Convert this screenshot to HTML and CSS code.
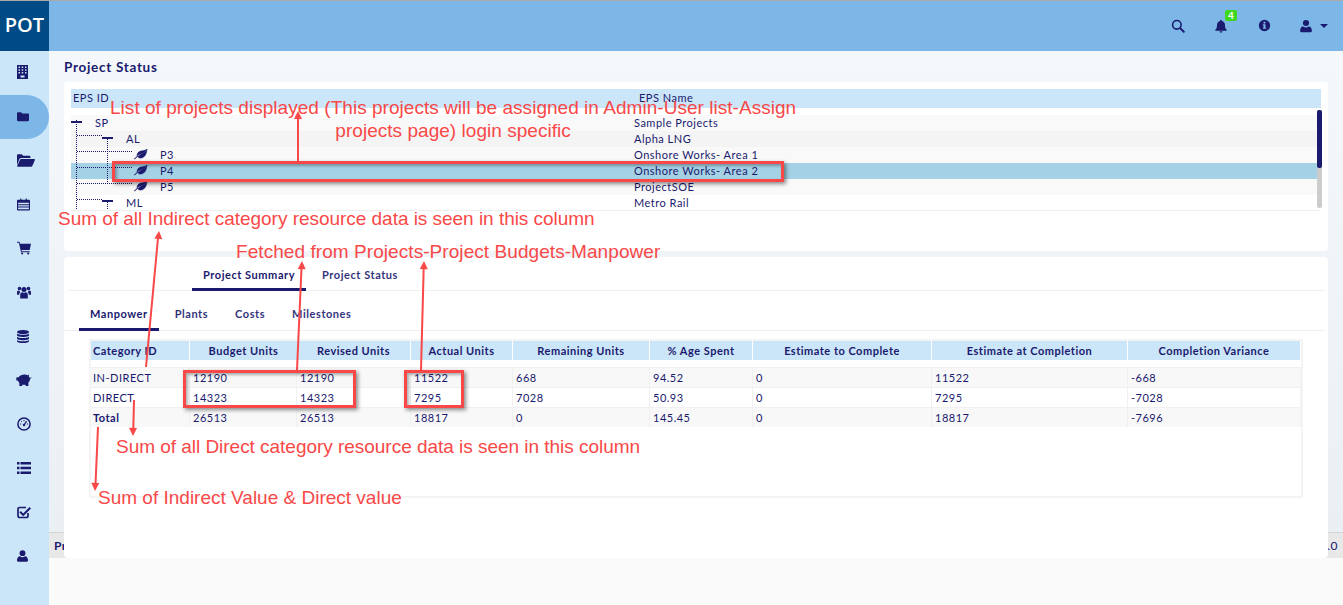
FILE: index.html
```html
<!DOCTYPE html>
<html lang="en">
<head>
  <meta charset="UTF-8">
  <title>Project Status</title>
  <link rel="stylesheet" href="styles.css">
</head>
<body>

<header class="topbar">
  <div class="logo">POT</div>
  <div class="top-icons">
    <svg class="top-icon search" viewBox="0 0 16 16"><circle cx="6.7" cy="6.7" r="4.9" fill="none" stroke="#1a1a6e" stroke-width="1.8"/><path d="M10.4 10.4l4.2 4.2" stroke="#1a1a6e" stroke-width="2.2" stroke-linecap="round"/></svg>
    <div class="bell-wrap">
      <svg class="top-icon" viewBox="0 0 16 16"><path d="M8 0.8c.6 0 1 .4 1 1v.5c2.3.5 3.600 2.300 3.600 4.700 0 2.600.5 3.900 2 5.500v.8H1.400v-.8c1.500-1.600 2-2.900 2-5.500 0-2.400 1.300-4.200 3.600-4.700v-.5c0-.6.4-1 1-1zM6.400 14.100h3.200c0 .9-.7 1.500-1.600 1.500s-1.600-.6-1.600-1.500z" fill="#1a1a6e"/></svg>
      <span class="badge">4</span>
    </div>
    <svg class="top-icon info" viewBox="0 0 16 16"><path fill-rule="evenodd" d="M8 1a7 7 0 1 1 0 14A7 7 0 0 1 8 1zM6.800 3.400v2.100h2.400V3.400zM6 6.600v1.300h.8v2.900H6v1.300h4v-1.300h-.8V6.600z" fill="#1a1a6e"/></svg>
    <div class="user-menu">
      <svg class="top-icon" viewBox="0 0 16 16"><circle cx="8" cy="4.600" r="3.500" fill="#1a1a6e"/><path d="M2.500 15c-.8 0-1.200-.5-1.200-1.200 0-3 1.200-5.300 3.500-5.300 1 .8 2.100 1.200 3.200 1.200s2.200-.4 3.200-1.200c2.300 0 3.500 2.300 3.500 5.300 0 .7-.4 1.200-1.200 1.200z" fill="#1a1a6e"/></svg>
      <span class="caret"></span>
    </div>
  </div>
</header>

<div class="layout">
  <nav class="sidebar">
    <a class="side-item"><svg viewBox="1.500 0 11 14" class="ico-s"><path fill-rule="evenodd" d="M1.500 0h11v14h-11zM3 1.500v1.500h1.500V1.500zM6.200 1.500v1.500h1.500V1.500zM9.500 1.500v1.500H11V1.500zM3 4.200v1.500h1.500V4.200zM6.200 4.200v1.500h1.500V4.200zM9.500 4.200v1.500H11V4.200zM3 7v1.500h1.500V7zM6.200 7v1.500h1.500V7zM9.500 7v1.500H11V7zM5 10.500V12.500h4V10.500z" fill="#1a1a6e"/></svg></a>
    <a class="side-item active"><svg viewBox="0 0 14 12" class="ico-f"><path d="M1.300 1h3.400l1.500 1.500h6.500c.7 0 1.300.6 1.300 1.300v6.400c0 .7-.6 1.300-1.300 1.300H1.300C.6 11.500 0 10.900 0 10.200V2.300C0 1.600.6 1 1.300 1z" fill="#1a1a6e"/></svg></a>
    <a class="side-item"><svg viewBox="0 0 18 13" class="ico-o"><path d="M0 11V1.500C0 .8.500.3 1.200.3h3.500l1.500 1.500h6c.7 0 1.200.5 1.200 1.200v1H4.200c-.8 0-1.400.4-1.800 1.100z" fill="#1a1a6e"/><path d="M4.300 5h13c.5 0 .8.500.6 1l-2.600 6c-.2.500-.7.800-1.200.8H.8c-.5 0-.8-.5-.6-1l2.800-6c.2-.500.700-.800 1.300-.800z" fill="#1a1a6e"/></svg></a>
    <a class="side-item"><svg viewBox="0 0 14 13" class="ico-c"><path fill-rule="evenodd" d="M1 1.500h2.500V0h1.200v1.500h4.600V0h1.200v1.500H13c.6 0 1 .4 1 1V12c0 .6-.4 1-1 1H1c-.6 0-1-.4-1-1V2.500c0-.6.400-1 1-1zM1.200 4.600v1.500h11.600V4.600zM1.200 7.200v1.500h11.600V7.200zM1.200 9.800v1.700h11.600V9.800z" fill="#1a1a6e"/></svg></a>
    <a class="side-item"><svg viewBox="0 0 15 14" class="ico-w"><path d="M0 .4h2.600l.7 2H15l-1.400 6.700H4.800l.4 1.500h8.500v1H4.300L2 1.500H0z" fill="#1a1a6e"/><circle cx="5.500" cy="12.900" r="1.100" fill="#1a1a6e"/><circle cx="12" cy="12.900" r="1.100" fill="#1a1a6e"/></svg></a>
    <a class="side-item"><svg viewBox="0 0 15 14" class="ico-w"><circle cx="7.500" cy="4.400" r="2.700" fill="#1a1a6e"/><circle cx="2.700" cy="3.300" r="1.900" fill="#1a1a6e"/><circle cx="12.300" cy="3.300" r="1.900" fill="#1a1a6e"/><path d="M3.400 14V10.400C3.400 8.300 4.500 7.300 5.700 7.300c.6.400 1.200.6 1.800.6s1.200-.2 1.800-.6c1.200 0 2.300 1 2.300 3.100V14z" fill="#1a1a6e"/><path d="M0 10V7.500C0 6 .8 5.500 1.600 5.500c.4.300.8.400 1.300.4 0 .700.200 1 .6 1.500C2.700 8 2.300 9 2.300 10zM15 10V7.500c0-1.500-.8-2-1.600-2-.4.300-.8.400-1.300.4 0 .700-.2 1-.6 1.500.8.600 1.200 1.600 1.200 2.600z" fill="#1a1a6e"/></svg></a>
    <a class="side-item"><svg viewBox="0 0 12 13" class="ico-d"><ellipse cx="6" cy="2" rx="6" ry="2" fill="#1a1a6e"/><path d="M0 3.400c1 1 3 1.400 6 1.400s5-.4 6-1.400v1.800c0 1-2.700 1.700-6 1.700S0 6.200 0 5.200zM0 6.700c1 1 3 1.400 6 1.400s5-.4 6-1.400v1.800c0 1-2.700 1.700-6 1.700S0 9.500 0 8.500zM0 9.900c1 1 3 1.400 6 1.400s5-.4 6-1.400v1.300c0 1-2.700 1.800-6 1.800S0 12.200 0 11.200z" fill="#1a1a6e"/></svg></a>
    <a class="side-item"><svg viewBox="0 0 16 12" class="ico-p"><path d="M2.500 3.200c1.500-1.700 3.500-2.700 6-2.700 1.300 0 2.400.3 3.200.8l1.200-.8v2.300c.4.400.6.800.8 1.200l1.300-.7c.2-.100.500 0 .4.300-.2.500-.9 1.200-1.400 1.500 0 1.500-.7 2.700-1.600 3.500V12h-2.600l-.4-1.300c-.8.200-2.300.2-3 0L6 12H3.400V9.100C2.600 8.400 2.100 7.600 1.900 6.600H.3V3.600z" fill="#1a1a6e"/></svg></a>
    <a class="side-item"><svg viewBox="0 0 14 14" class="ico-w"><circle cx="7" cy="7" r="6.100" fill="none" stroke="#1a1a6e" stroke-width="1.500"/><path d="M7 8l2.600-3.800" stroke="#1a1a6e" stroke-width="1.200"/><circle cx="7" cy="8" r="1.200" fill="#1a1a6e"/><path d="M3 7h1.200M9.800 7H11M7 3v1.200M4.200 4.200l.8.800" stroke="#1a1a6e"/></svg></a>
    <a class="side-item"><svg viewBox="0 0 14 13" class="ico-w"><path d="M0 .5h2.500v2.500H0zM3.500 .5H14v2.500H3.500zM0 5.200h2.500v2.500H0zM3.500 5.200H14v2.500H3.500zM0 10h2.500v2.500H0zM3.500 10H14v2.500H3.500z" fill="#1a1a6e"/></svg></a>
    <a class="side-item"><svg viewBox="0 0 14 13" class="ico-w"><path d="M11 7.500V10.300c0 1-.7 1.700-1.700 1.700H2.700C1.700 12 1 11.300 1 10.300V3.700C1 2.700 1.700 2 2.700 2H9" fill="none" stroke="#1a1a6e" stroke-width="1.700"/><path d="M3.800 5.600l2.400 2.400L12.500 1.500 14 3 6.200 10.800 2.400 7z" fill="#1a1a6e"/></svg></a>
    <a class="side-item"><svg viewBox="1 0.800 14 14.900" class="ico-u"><circle cx="8" cy="4.600" r="3.700" fill="#1a1a6e"/><path d="M2.500 15.500c-1 0-1.500-.5-1.500-1.400 0-3 1.400-5.400 3.800-5.400 1 .8 2.100 1.200 3.200 1.200s2.200-.4 3.200-1.200c2.400 0 3.800 2.400 3.800 5.400 0 .9-.5 1.400-1.500 1.400z" fill="#1a1a6e"/></svg></a>
  </nav>

  <main class="main">
    <div class="content">
      <h1 class="page-title">Project Status</h1>

      <section class="card card-tree">
        <div class="tree-head">
          <div class="tree-head-id">EPS ID</div>
          <div class="tree-head-name">EPS Name</div>
        </div>
        <div class="tree-body">
          <div class="tree-row odd"><span class="tree-id lvl0">SP</span><span class="tree-name">Sample Projects</span></div>
          <div class="tree-row alt"><span class="tree-id lvl1">AL</span><span class="tree-name">Alpha LNG</span></div>
          <div class="tree-row odd"><span class="tree-id lvl2">P3</span><span class="tree-name">Onshore Works- Area 1</span></div>
          <div class="tree-row selected"><span class="tree-id lvl2">P4</span><span class="tree-name">Onshore Works- Area 2</span></div>
          <div class="tree-row odd"><span class="tree-id lvl2">P5</span><span class="tree-name">ProjectSOE</span></div>
          <div class="tree-row"><span class="tree-id lvl1">ML</span><span class="tree-name">Metro Rail</span></div>

          <svg class="tree-lines" width="90" height="95">
            <defs>
              <g id="leaf" stroke="#1a1a6e" stroke-width="0.4">
                <path d="M13 0c-.6 1-2.500 1.300-5 1.700C4.800 2.200 3 3.900 3 6.200c0 .4 0 .7.1 1 1.200-1.300 3-2.400 5.400-3C10.500 3.500 12.300 1.800 13 0z"/>
                <path d="M3.700 8c1 1 2.400 1.400 3.900 1C11.300 8.200 12.900 4.200 13 0c-.3 1.500-2 3.400-5 4.600-1.800.8-3.200 2-4.300 3.400z"/>
                <path d="M0 10c1-.8 2-1.800 3.200-3l.5.4C2.500 8.600 1.300 9.600.5 10z"/>
              </g>
            </defs>
            <path class="dots" d="M5.500 5V95M5.500 20.500H32M36.500 22V68M36.500 87V95M5.500 36.500H62M5.500 52.500H62M5.500 68.500H62M5.500 84.500H32"/>
            <g fill="#1a1a6e">
              <rect x="0" y="6" width="11" height="2"/>
              <rect x="31" y="22" width="11" height="2"/>
              <rect x="31" y="85" width="11" height="2"/>
              <use href="#leaf" x="63" y="34"/>
              <use href="#leaf" x="63" y="50"/>
              <use href="#leaf" x="63" y="66"/>
            </g>
          </svg>
          <div class="tree-scroll"><div class="tree-thumb"></div></div>
        </div>
      </section>

      <section class="card card-summary">
        <div class="tabs tabs-main">
          <a class="tab on">Project Summary</a>
          <a class="tab">Project Status</a>
        </div>
        <div class="tabs tabs-sub">
          <a class="tab on">Manpower</a>
          <a class="tab">Plants</a>
          <a class="tab">Costs</a>
          <a class="tab">Milestones</a>
        </div>
        <div class="table-box">
          <table class="summary">
            <colgroup>
              <col class="c1"><col class="c2"><col class="c3"><col class="c4"><col class="c5"><col class="c6"><col class="c7"><col class="c8"><col class="c9">
            </colgroup>
            <thead>
              <tr>
                <th class="left">Category ID</th>
                <th class="joined">Budget Units</th>
                <th>Revised Units</th>
                <th>Actual Units</th>
                <th>Remaining Units</th>
                <th>% Age Spent</th>
                <th>Estimate to Complete</th>
                <th>Estimate at Completion</th>
                <th>Completion Variance</th>
              </tr>
            </thead>
            <tbody>
              <tr><td class="first">IN-DIRECT</td><td>12190</td><td>12190</td><td>11522</td><td>668</td><td>94.52</td><td>0</td><td>11522</td><td>-668</td></tr>
              <tr><td class="first">DIRECT</td><td>14323</td><td>14323</td><td>7295</td><td>7028</td><td>50.93</td><td>0</td><td>7295</td><td>-7028</td></tr>
              <tr><td class="first total">Total</td><td>26513</td><td>26513</td><td>18817</td><td>0</td><td>145.45</td><td>0</td><td>18817</td><td>-7696</td></tr>
            </tbody>
          </table>
        </div>
      </section>

      <footer class="foot"><span class="foot-left">Pr</span><span>.0</span></footer>
    </div>
  </main>
</div>

<!-- annotations drawn on top of the screenshot -->
<div class="note note-list">List of projects displayed (This projects will be assigned in Admin-User list-Assign<br>projects page) login specific</div>
<div class="note note-indirect">Sum of all Indirect category resource data is seen in this column</div>
<div class="note note-fetched">Fetched from Projects-Project Budgets-Manpower</div>
<div class="note note-direct">Sum of all Direct category resource data is seen in this column</div>
<div class="note note-total">Sum of Indirect Value &amp; Direct value</div>

<div class="redbox box-p4"></div>
<div class="redbox box-budget"></div>
<div class="redbox box-actual"></div>

<svg class="arrows" width="1343" height="605">
  <g stroke="#f84848" stroke-width="2" fill="none">
    <path d="M298 162V118"/>
    <path d="M146 367L158 238"/>
    <path d="M297 370L301.500 268"/>
    <path d="M421 370L423.700 268"/>
    <path d="M134 400L133.300 429"/>
    <path d="M98 427L95.500 484"/>
  </g>
  <g fill="#f84848">
    <path d="M298 111l-4 8h8z"/>
    <path d="M159 231l-4.700 7.600 8 .7z"/>
    <path d="M302 261l-4.300 8 8 .3z"/>
    <path d="M424 261l-4.200 8 8 .2z"/>
    <path d="M133 436l4-8-8-.2z"/>
    <path d="M95 491l4.300-8-8-.3z"/>
  </g>
</svg>

</body>
</html>
```
FILE: styles.css
```css
body {
  margin: 0;
  height: 605px;
  overflow: hidden;
  position: relative;
  font-family: 'Lato', Arial, sans-serif;
  font-size: 11px;
  letter-spacing: 0.5px;
  color: #1a1a6e;
  background: #fafafa;
}

/* top bar */
.topbar {
  display: flex;
  height: 50px;
  border-top: 1px solid #a9a9a9;
  background: #7cb7e8;
}

.logo {
  width: 49px;
  background: #004b85;
  color: #fff;
  font-family: 'Open Sans', Arial, sans-serif;
  font-size: 20px;
  font-weight: 600;
  letter-spacing: 0;
  line-height: 47px;
  text-align: center;
}

.top-icons {
  flex: 1;
  display: flex;
  justify-content: flex-end;
  align-items: center;
  padding-bottom: 1px;
}

.top-icon {
  display: block;
  width: 14px;
  height: 14px;
}

.search {
  margin-right: 29px;
}

.bell-wrap {
  position: relative;
  margin-right: 30px;
}

.badge {
  position: absolute;
  top: -9px;
  left: 11px;
  width: 12px;
  height: 11px;
  border-radius: 2px;
  background: #3fd81e;
  color: #fff;
  font-size: 10px;
  font-weight: 700;
  line-height: 10px;
  letter-spacing: 0;
  text-align: center;
}

.info {
  margin-right: 28px;
  width: 13px;
  height: 13px;
}

.user-menu {
  display: flex;
  align-items: center;
  margin-right: 15px;
}

.caret {
  margin-left: 7px;
  border-top: 4px solid #1a1a6e;
  border-left: 4px solid transparent;
  border-right: 4px solid transparent;
}

/* sidebar + main */
.layout {
  display: flex;
  height: 554px;
}

.sidebar {
  width: 49px;
  flex-shrink: 0;
  background: #cbe5f9;
  display: flex;
  flex-direction: column;
}

.side-item {
  height: 44px;
  flex-shrink: 0;
  display: flex;
  align-items: center;
  padding: 0 0 2px 17px;
  box-sizing: border-box;
}

.side-item.active {
  background: #7cb7e8;
  border-radius: 0 22px 22px 0;
}

.ico-s { width: 11px; height: 14px; }
.ico-f { width: 12px; height: 11px; }
.ico-o { width: 18px; height: 13px; }
.ico-c { width: 13px; height: 13px; }
.ico-w { width: 14px; height: 14px; }
.ico-d { width: 12px; height: 13px; }
.ico-p { width: 16px; height: 12px; margin-left: -1px; }
.ico-u { width: 11px; height: 12px; }

.main {
  flex: 1;
  min-width: 0;
}

.content {
  height: 507px;
  padding: 0 15px;
  background: linear-gradient(#f4f8fb, #eaeff4);
}

.page-title {
  margin: 0;
  height: 31px;
  font-size: 13.5px;
  font-weight: 700;
  line-height: 33px;
  letter-spacing: 0.7px;
}

.card {
  position: relative;
  z-index: 1;
  background: #fff;
  border-radius: 4px;
}

/* project tree */
.card-tree {
  height: 169px;
  box-sizing: border-box;
  padding: 7px 7px 0;
  margin-bottom: 6px;
}

.tree-head {
  display: flex;
  height: 19px;
  background: #cbe5f9;
  line-height: 18px;
}

.tree-head-id {
  width: 566px;
  padding-left: 2px;
}

.tree-body {
  position: relative;
  margin-top: 7px;
  border-bottom: 1px solid #eee;
  height: 95px;
}

.tree-row {
  display: flex;
  height: 16px;
  width: 1246px;
  line-height: 16px;
}

.tree-row.odd { background: #f9f9f9; }
.tree-row.alt { background: #f4f4f4; }
.tree-row.selected { background: #a5d1e5; }

.tree-id {
  width: 563px;
  box-sizing: border-box;
}

.lvl0 { padding-left: 24px; }
.lvl1 { padding-left: 55px; }
.lvl2 { padding-left: 89px; }

.tree-lines {
  position: absolute;
  top: 0;
  left: 0;
}

.dots {
  fill: none;
  stroke: #1a1a6e;
  stroke-dasharray: 1 1;
  shape-rendering: crispEdges;
}

.tree-scroll {
  position: absolute;
  top: -5px;
  right: -1px;
  width: 5px;
  height: 98px;
  border-radius: 2px;
  background: #ccc;
}

.tree-thumb {
  height: 58px;
  border-radius: 2px;
  background: #1a1a6e;
}

/* tabs + table */
.card-summary {
  height: 301px;
  box-sizing: border-box;
  padding-top: 1px;
}

.tabs {
  display: flex;
  border-bottom: 1px solid #f0f0f0;
}

.tab {
  padding: 0 11px;
  margin-right: 5px;
  font-weight: 700;
  letter-spacing: 0.55px;
  opacity: 0.9;
}

.tab.on {
  opacity: 1;
  border-bottom: 3px solid #1a1a6e;
  margin-bottom: -1px;
}

.tabs-main {
  height: 32px;
  padding-left: 124px;
  margin-left: 4px;
  margin-right: 3px;
  line-height: 33px;
}

.tabs-main .tab.on {
  height: 30px;
}

.tabs-sub {
  height: 39px;
  padding-left: 15px;
  margin-right: 3px;
  line-height: 45px;
}

.tabs-sub .tab.on {
  height: 37px;
}

.table-box {
  margin: 8px 25px 0 25px;
  height: 155px;
  border: 2px solid #f4f4f4;
}

.summary {
  width: 100%;
  table-layout: fixed;
  border-collapse: separate;
  border-spacing: 0;
}

.c1 { width: 99px; }
.c2 { width: 107px; }
.c3 { width: 114px; }
.c4 { width: 102px; }
.c5 { width: 137px; }
.c6 { width: 103px; }
.c7 { width: 179px; }
.c8 { width: 196px; }
.c9 { width: auto; }

.summary th {
  height: 26px;
  padding: 0;
  border-right: 1px solid #fff;
  border-bottom: 7px solid #fff;
  background: #cbe5f9;
  background-clip: padding-box;
  font-weight: 700;
  text-align: center;
  box-sizing: border-box;
}

.summary th.left {
  text-align: left;
  padding-left: 2px;
}

.summary th.joined {
  border-right: 0;
}

.summary td {
  height: 20px;
  padding: 0 0 0 3px;
  box-sizing: border-box;
  border-right: 1px solid #f0f0f0;
  border-top: 1px solid #f0f0f0;
}

.summary td.first {
  padding-left: 2px;
}

.summary tbody tr:nth-child(odd) {
  background: #f8f8f8;
}

.summary .total {
  font-weight: 700;
}

/* footer sits behind the second card */
.foot {
  position: relative;
  display: flex;
  justify-content: space-between;
  align-items: center;
  height: 26px;
  margin: -26px -15px 0;
  padding: 0 5px;
  background: #e8e8e8;
  border-top: 1px solid #d5d5d5;
  box-sizing: border-box;
  font-size: 12px;
}

.foot-left {
  font-weight: 700;
}

/* annotations */
.note {
  position: absolute;
  z-index: 5;
  font-family: 'Liberation Sans', Arial, sans-serif;
  font-size: 19px;
  letter-spacing: 0;
  line-height: 23px;
  color: #f84848;
  white-space: nowrap;
}

.note-list {
  left: 110px;
  top: 96px;
  text-align: center;
  letter-spacing: 0.035px;
}

.note-indirect { left: 58px; top: 207px; letter-spacing: -0.03px; }
.note-fetched { left: 236px; top: 240px; letter-spacing: 0.065px; }
.note-direct { left: 116px; top: 435px; letter-spacing: -0.03px; }
.note-total { left: 98px; top: 486px; }

.redbox {
  position: absolute;
  z-index: 4;
  box-sizing: border-box;
  border: 3px solid #f84848;
  box-shadow: 2px 2px 4px rgba(0, 0, 0, 0.45), inset 2px 2px 3px rgba(0, 0, 0, 0.3);
}

.box-p4 { left: 112px; top: 161px; width: 672px; height: 21px; }
.box-budget { left: 183px; top: 370px; width: 173px; height: 38px; }
.box-actual { left: 404px; top: 370px; width: 60px; height: 38px; }

.arrows {
  position: absolute;
  top: 0;
  left: 0;
  z-index: 6;
}
```
